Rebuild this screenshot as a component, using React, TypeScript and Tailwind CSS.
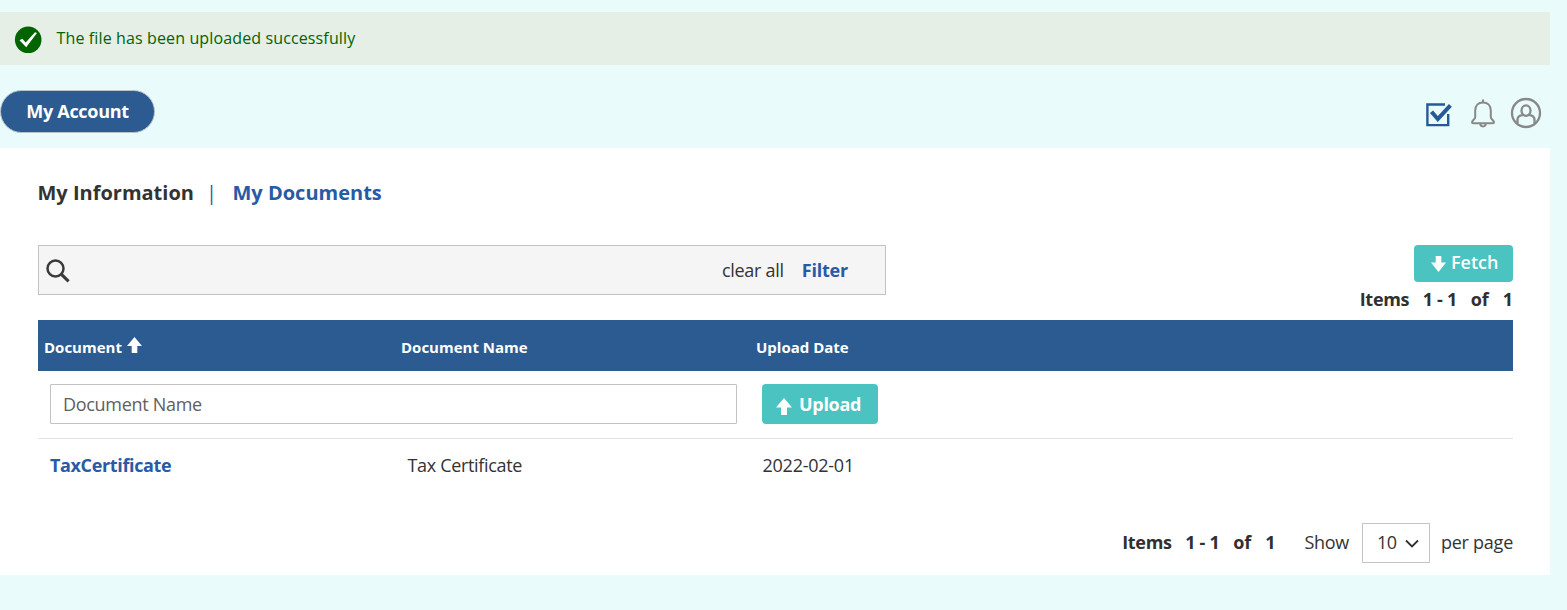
import type { ReactNode } from "react";

function Arrow({ down = false, className = "" }: { down?: boolean; className?: string }) {
  return (
    <svg viewBox="0 0 16 17" className={className} fill="currentColor" aria-hidden="true">
      <path d={down ? "M5 0h6v7h5L8 17 0 7h5z" : "M8 0l8 9.5h-5V17H5V9.5H0z"} />
    </svg>
  );
}

function ItemCount({ className = "" }: { className?: string }) {
  return (
    <div className={`flex text-[18px] leading-6 font-bold whitespace-nowrap text-[#303030] ${className}`}>
      <span className="w-[63px] tracking-[-0.3px]">Items</span>
      <span className="w-[48px] tracking-[-0.3px]">1 - 1</span>
      <span className="w-[32px]">of</span>
      <span>1</span>
    </div>
  );
}

function Toolbar() {
  return (
    <div className="flex items-start text-[#888]">
      <svg className="mt-[22px] h-[26px] w-[28px]" viewBox="0 0 28 26" fill="none" stroke="#255a96" aria-label="Tasks">
        <path d="M21 2.5H3.4v20.6h20.8V12" strokeWidth="2.4" />
        <path d="M7.5 9.8l6.3 7.2L26.4 3.3" strokeWidth="4" />
      </svg>
      <svg className="mt-[19px] ml-[18px] h-[29px] w-[26px]" viewBox="0 0 26 29" fill="none" stroke="currentColor" strokeWidth="2" aria-label="Notifications">
        <path d="M13 .5v3M13 3.5c-4.8 0-7.8 3.1-7.8 8v6.8c0 1.6-3.2 3.4-3.2 5 0 .6.5.9 1.2.9h19.6c.7 0 1.2-.3 1.2-.9 0-1.6-3.2-3.4-3.2-5v-6.8c0-4.9-3-8-7.8-8z" />
        <path d="M10.2 24.5c.1 2 1.3 2.9 2.8 2.9s2.7-.9 2.8-2.9" />
      </svg>
      <svg className="mt-[17px] ml-[14px] h-[32px] w-[32px]" viewBox="0 0 32 32" fill="none" stroke="currentColor" strokeWidth="2.3" aria-label="Profile">
        <circle cx="16" cy="16" r="14" />
        <ellipse cx="16" cy="13.6" rx="4.5" ry="5.2" />
        <path d="M12.8 18.2c-3.5.3-5.3 2-5.3 4.6v3.6M19.2 18.2c3.5.3 5.3 2 5.3 4.6v3.6" />
      </svg>
    </div>
  );
}

function HeaderCell({ children }: { children: ReactNode }) {
  return <div className="flex pt-[17px] text-[15px] leading-5 font-bold text-white">{children}</div>;
}

export default function App() {
  return (
    <div className="h-[610px] bg-[#eafbfb] pt-3 pr-[17px] font-['Open_Sans',sans-serif] text-[18px] text-[#333]">
      <div className="flex h-[53px] bg-[#e5efe5] text-[#006400]">
        <svg className="mt-[14px] ml-[14px] h-[28px] w-[28px]" viewBox="0 0 28 28" aria-hidden="true">
          <circle cx="14.2" cy="13.8" r="13.3" fill="#006400" />
          <path d="M5.5 14.2l2.8-1.4 3.4 3.6L21 6.2l2 .9-10.8 14.2z" fill="white" />
        </svg>
        <p className="mt-[14px] ml-[14.5px] text-[16px] leading-6 tracking-[0.13px]">The file has been uploaded successfully</p>
      </div>
      <header className="flex h-[83px] justify-between pt-[25px] pr-[8px]">
        <button className="h-[43px] w-[155px] rounded-full border border-[#b8c4cc] bg-[#2b5b91] pb-px text-[18px] font-bold tracking-[-0.3px] text-white">
          My Account
        </button>
        <div className="-mt-[10px]">
          <Toolbar />
        </div>
      </header>
      <main className="h-[427px] bg-white pt-[29px] pr-[37px] pl-[38px]">
        <nav className="flex h-[32px] text-[20px] leading-8 font-bold">
          <span className="-ml-[0.5px] w-[156px] whitespace-nowrap">My Information</span>
          <span className="ml-[12.5px] w-[11px] text-center font-normal text-[#285aa5]">|</span>
          <span className="ml-[15.5px] text-[#285aa5]">My Documents</span>
        </nav>
        <div className="mt-[36px] flex h-[75px] justify-between">
          <div className="flex h-[50px] w-[848px] items-center border border-[#c2c2c2] bg-[#f5f5f5] pl-[7px]">
            <svg className="mt-[2px] h-[24px] w-[25px]" viewBox="0 0 25 24" fill="none" stroke="#3b3b3b" aria-label="Search">
              <circle cx="9.5" cy="9.5" r="8" strokeWidth="2.5" />
              <path d="M15.2 15.2l7.4 7.1" strokeWidth="3.2" />
            </svg>
            <span className="ml-auto tracking-[-0.3px]">clear all</span>
            <span className="mr-[37px] ml-[18px] font-bold tracking-[-0.2px] text-[#285aa5]">Filter</span>
          </div>
          <div className="flex flex-col items-end">
            <button className="flex h-[37px] w-[99px] rounded bg-[#4bc3c1] pt-[5px] pl-[17px] text-[18px] leading-6 font-semibold text-white">
              <Arrow down className="mt-[6px] mr-[5px] h-[16px] w-[15px]" />
              Fetch
            </button>
            <ItemCount className="mt-[5px]" />
          </div>
        </div>
        <div className="grid h-[51px] grid-cols-[357px_355px_1fr] bg-[#2b5b91] pl-[6px]">
          <HeaderCell>
            Document
            <Arrow className="ml-[5px] h-[16px] w-[15px]" />
          </HeaderCell>
          <HeaderCell>Document Name</HeaderCell>
          <HeaderCell>Upload Date</HeaderCell>
        </div>
        <div className="flex h-[68px] border-b border-[#e3e3e3] pt-[13px] pl-3">
          <input
            className="h-[40px] w-[687px] rounded-[1px] border border-[#c2c2c2] px-3 text-[18px] tracking-[-0.3px] text-[#333] placeholder:text-[#606060]"
            placeholder="Document Name"
            aria-label="Document Name"
          />
          <button className="ml-[25px] flex h-[40px] w-[116px] rounded bg-[#4bc3c1] pt-[8px] pl-[14px] text-[18px] leading-6 font-bold tracking-[-0.3px] text-white">
            <Arrow className="mt-[6px] mr-[7px] h-[17px] w-[16px]" />
            Upload
          </button>
        </div>
        <div className="grid h-[84px] grid-cols-[357px_355px_1fr] pt-[14px] pl-3 leading-6">
          <span className="font-bold tracking-[-0.36px] text-[#285aa5]">TaxCertificate</span>
          <span className="pl-[0.5px] tracking-[-0.33px]">Tax Certificate</span>
          <span className="pl-[0.5px] tracking-[-0.25px]">2022-02-01</span>
        </div>
        <div className="-mt-px flex h-[40px] items-center justify-end">
          <ItemCount />
          <span className="ml-[29px] tracking-[-0.3px]">Show</span>
          <button className="relative top-px mr-[11px] ml-[13px] flex h-[40px] w-[68px] items-center border border-[#c5c5c5] pb-[2px] pl-[14px] tracking-[-0.4px]">
            10
            <svg className="mt-[4px] ml-[8px] h-[10px] w-[14px]" viewBox="0 0 14 10" fill="none" stroke="#303030" strokeWidth="1.8">
              <path d="M1 1.5l6 6 6-6" />
            </svg>
          </button>
          <span className="tracking-[-0.25px]">per page</span>
        </div>
      </main>
    </div>
  );
}
